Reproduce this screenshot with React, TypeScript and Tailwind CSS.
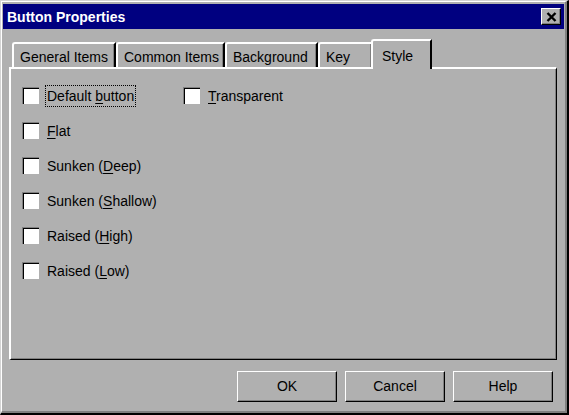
import React from "react";

const FONT = { fontFamily: '"Liberation Sans", Arial, sans-serif' };

function Box() {
  return (
    <div className="w-[17px] h-[17px] shrink-0 border-t border-l border-[#808080] border-r-white border-b-white">
      <div className="w-full h-full bg-white border-t border-l border-black border-r-[#d8d8d8] border-b-[#d8d8d8]" />
    </div>
  );
}

function Check({
  pre,
  u,
  post,
  focus,
}: {
  pre: string;
  u: string;
  post: string;
  focus?: boolean;
}) {
  return (
    <div className="flex items-center h-[17px]">
      <Box />
      <span
        className={
          "ml-[6px] px-[1px] py-[2px] border leading-[16px] text-[14px] text-black whitespace-nowrap " +
          (focus ? "border-dotted border-black" : "border-transparent")
        }
      >
        {pre}
        <span className="underline underline-offset-[2px]">{u}</span>
        {post}
      </span>
    </div>
  );
}

function Tab({ label, w, selected }: { label: string; w: string; selected?: boolean }) {
  if (selected) {
    return (
      <div
        className={`relative z-10 -ml-[2px] -mb-[2px] h-[30px] ${w} bg-[#b0b0b0] border-t-2 border-l-2 border-white border-r-2 border-r-black rounded-tl-[3px] flex items-start justify-start pl-[9px] pt-[5px] text-[14px] text-black`}
      >
        {label}
      </div>
    );
  }
  return (
    <div
      className={`h-[25px] ${w} border-t-2 border-l-2 border-white border-r-2 border-r-black rounded-tl-[3px] shadow-[inset_-1px_0_0_#808080] flex items-center justify-start pl-[6px] pt-[3px] text-[14px] text-black whitespace-nowrap`}
    >
      {label}
    </div>
  );
}

function Btn({ label }: { label: string }) {
  return (
    <div className="w-[100px] h-[31px] border-t border-l border-white border-r border-b border-r-black border-b-black shadow-[inset_-1px_-1px_0_#808080] flex items-center justify-center text-[14px] text-black">
      {label}
    </div>
  );
}

export default function App() {
  return (
    <div
      style={FONT}
      className="w-[569px] h-[415px] bg-[#b0b0b0] border-t border-l border-[#d4d4d4] border-r-2 border-b-2 border-r-black border-b-black"
    >
      <div className="w-full h-full flex flex-col border-t border-l border-white border-r-2 border-b-2 border-r-[#808080] border-b-[#808080]">
        {/* Title bar */}
        <div className="mx-[1px] mt-[2px] h-[25px] bg-[#000080] flex items-center justify-between pl-[4px] pr-[3px]">
          <span className="text-white font-bold text-[14px] leading-none">Button Properties</span>
          <div className="w-[20px] h-[17px] bg-[#b0b0b0] border-t border-l border-white border-r border-b border-r-black border-b-black shadow-[inset_-1px_-1px_0_#808080] flex items-center justify-center">
            <svg width="11" height="10" viewBox="0 0 11 10">
              <path d="M1.5 1 L9.5 9 M9.5 1 L1.5 9" stroke="#000" strokeWidth="2.4" strokeLinecap="butt" />
            </svg>
          </div>
        </div>

        {/* Tabs */}
        <div className="mt-[10px] ml-[7px] mr-[8px] flex flex-col">
          <div className="h-[28px] flex items-end pl-[3px]">
            <Tab label="General Items" w="w-[104px]" />
            <Tab label="Common Items" w="w-[109px]" />
            <Tab label="Background" w="w-[93px]" />
            <Tab label="Key" w="w-[55px]" />
            <Tab label="Style" w="w-[61px]" selected />
          </div>
          <div className="relative z-0 h-[293px] border-t-2 border-l-2 border-white border-r border-b border-r-black border-b-black shadow-[inset_-1px_-1px_0_#808080] pl-[11px] pt-[18px] flex">
            <div className="w-[161px] flex flex-col gap-[18px]">
              <Check pre="Default " u="b" post="utton" focus />
              <Check pre="" u="F" post="lat" />
              <Check pre="Sunken (" u="D" post="eep)" />
              <Check pre="Sunken (" u="S" post="hallow)" />
              <Check pre="Raised (" u="H" post="igh)" />
              <Check pre="Raised (" u="L" post="ow)" />
            </div>
            <div className="flex flex-col">
              <Check pre="" u="T" post="ransparent" />
            </div>
          </div>
        </div>

        {/* Buttons */}
        <div className="mt-[11px] flex justify-end gap-[8px] pr-[12px]">
          <Btn label="OK" />
          <Btn label="Cancel" />
          <Btn label="Help" />
        </div>
      </div>
    </div>
  );
}
